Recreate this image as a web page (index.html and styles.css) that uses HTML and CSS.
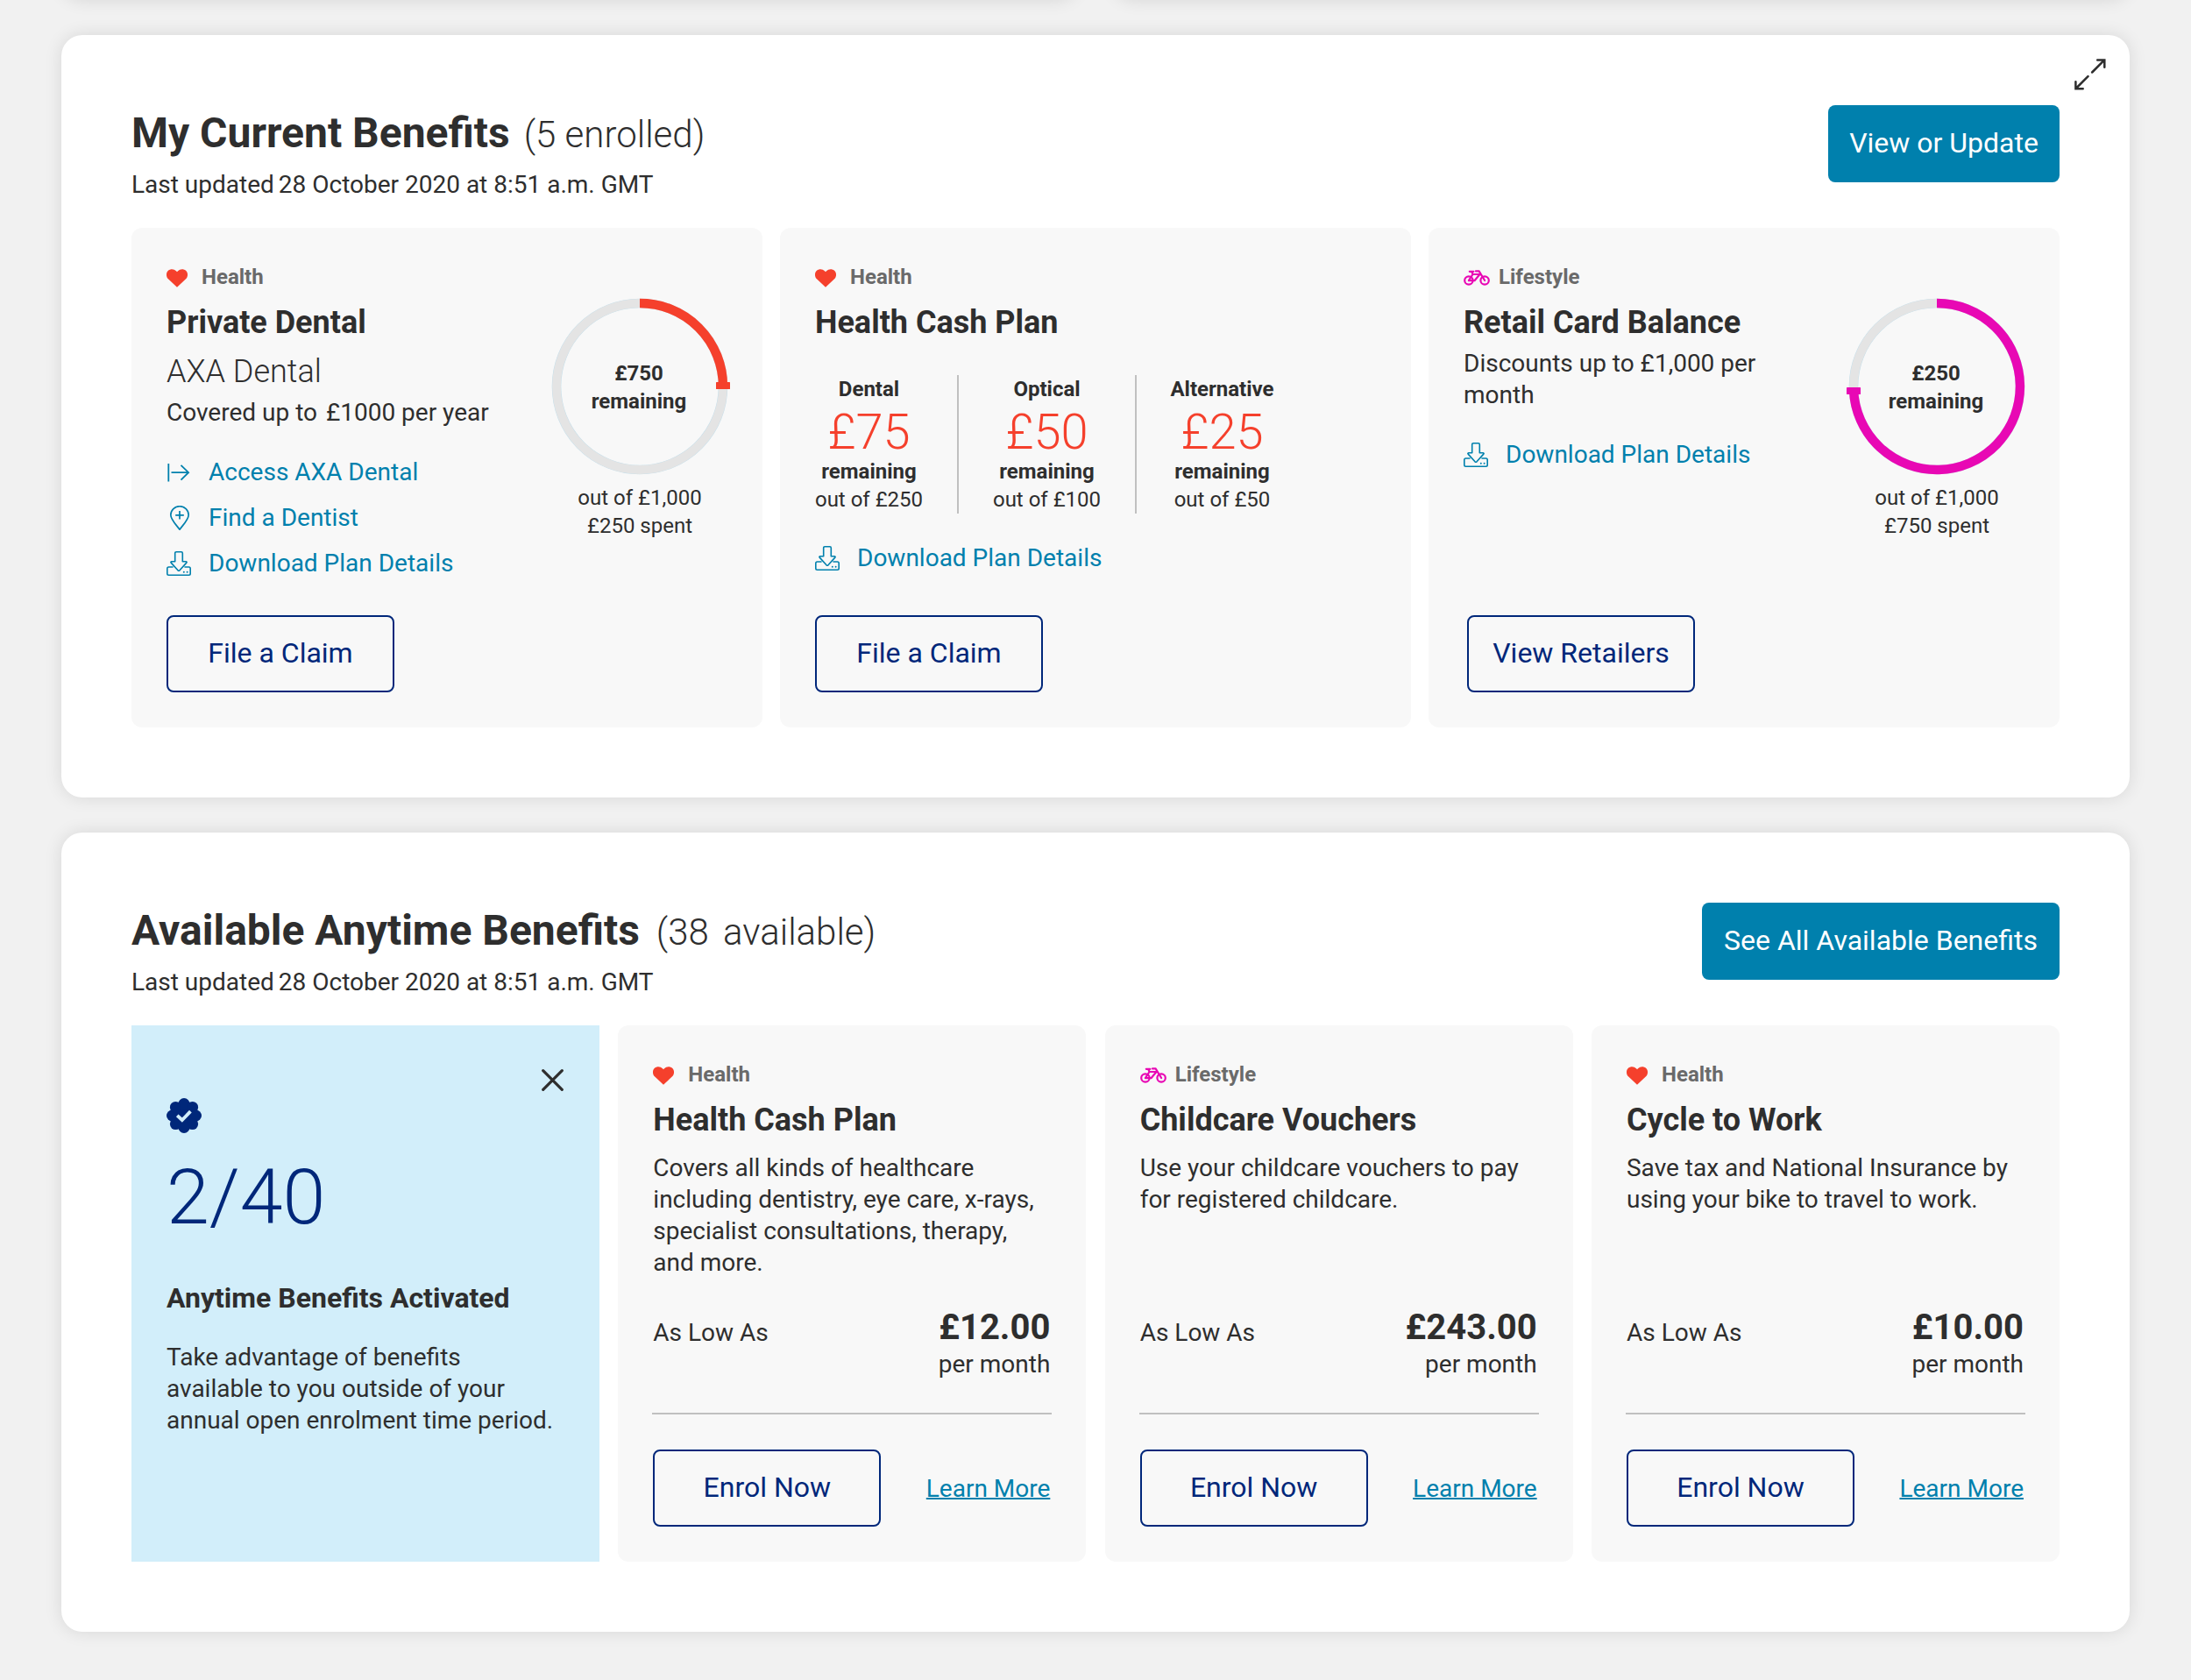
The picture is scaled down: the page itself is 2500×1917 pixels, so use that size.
FILE: index.html
```html
<!DOCTYPE html>
<html lang="en-GB">
<head>
<meta charset="utf-8">
<title>Benefits</title>
<link rel="stylesheet" href="styles.css">
</head>
<body>
<svg class="sprite" aria-hidden="true">
  <symbol id="heart" viewBox="0 0 24 21"><path d="M12 20.8 1.9 11.2C-.8 8.4-.6 4 2 1.7 4.600-.6 8.700-.3 11 2.200L12 3.300l1-1.100C15.300-.3 19.400-.6 22 1.700c2.600 2.300 2.800 6.700.1 9.500z" fill="#f5402c"/></symbol>
  <symbol id="bike" viewBox="0 0 30 18"><g fill="none" stroke="#e808b4" stroke-width="2.200" stroke-linejoin="round" stroke-linecap="round"><circle cx="5.900" cy="12" r="4.700"/><circle cx="24.100" cy="12" r="4.700"/><path d="M5.900 12.200h6.600L18.500 5H10.500zM12.500 12.200M10.500 5 9.200 1.800M6.800 1.800h4.600M14 1.400h3.600l6.500 10.600"/></g></symbol>
  <symbol id="download" viewBox="0 0 28 28"><g fill="none" stroke="#0080ad" stroke-width="1.600" stroke-linejoin="round" stroke-linecap="round"><path d="M9.700 2.200q0-1.400 1.400-1.400h5.800q1.400 0 1.400 1.400v9.500h4q1.300.3.500 1.400L15 21.800q-1 .9-2 0l-7.800-8.700q-.8-1.100.5-1.400h4z"/><path d="M7 18H2.500q-1.700 0-1.700 1.700v5.800q0 1.700 1.700 1.700h23q1.700 0 1.700-1.700v-5.800q0-1.700-1.700-1.700H21"/></g><circle cx="19.800" cy="23.700" r="1" fill="#0080ad"/><circle cx="23.600" cy="23.700" r="1" fill="#0080ad"/></symbol>
  <symbol id="enter" viewBox="0 0 28 28"><path d="M2.300 4v20.500M5.500 14.200h19.500M16.500 5.800l8.600 8.400-8.600 8.400" fill="none" stroke="#0080ad" stroke-width="1.800"/></symbol>
  <symbol id="pin" viewBox="0 0 28 28"><path d="M15 27.300C11.500 22.300 4.800 16 4.800 10.500a10.200 9.800 0 0 1 20.400 0C25.200 16 18.500 22.300 15 27.300zM15 6v9.600M10.200 10.800h9.600" fill="none" stroke="#0080ad" stroke-width="1.700" stroke-linejoin="round"/></symbol>
</svg>

<div class="upper-row"><div class="panel-end"></div><div class="panel-end"></div></div>

<section class="panel panel-current">
  <svg class="expand" viewBox="0 0 36 36"><path d="M20.200 15.500 34 1.700M26.200 1.400h8.100v8.300M15.500 20.200 1.700 34M1.400 26.200v8.100h8.300" fill="none" stroke="#2e2e2e" stroke-width="2.500" stroke-linecap="round"/></svg>
  <header class="panel-head">
    <div>
      <h2 class="panel-title">My Current Benefits<span class="count">(5 enrolled)</span></h2>
      <p class="updated"><span class="updated-lead">Last updated</span> 28 October 2020 at 8:51 a.m. GMT</p>
    </div>
    <button class="btn-solid btn-view">View or Update</button>
  </header>
  <div class="current-grid">
    <article class="card">
      <div class="card-body">
        <div class="card-main">
          <div class="tag"><span class="tag-icon"><svg class="i-heart"><use href="#heart"/></svg></span>Health</div>
          <h3 class="card-title">Private Dental</h3>
          <p class="provider">AXA Dental</p>
          <p class="text cover">Covered up to <span class="cover-sum">£1000 per year</span></p>
          <ul class="links">
            <li class="link"><svg class="i-link"><use href="#enter"/></svg>Access AXA Dental</li>
            <li class="link"><svg class="i-link"><use href="#pin"/></svg>Find a Dentist</li>
            <li class="link"><svg class="i-link"><use href="#download"/></svg>Download Plan Details</li>
          </ul>
        </div>
        <div class="gauge">
          <div class="ring">
            <svg class="ring-svg" viewBox="0 0 200 200"><circle cx="100" cy="100" r="95" fill="none" stroke="#c3dfec" stroke-width="10.600"/><circle cx="100" cy="100" r="95" fill="none" stroke="#e4e4e4" stroke-width="9.800"/><path d="M100 5a95 95 0 0 1 95 95" fill="none" stroke="#f5402c" stroke-width="10.400"/><rect x="187" y="95" width="16" height="8" rx=".5" fill="#f5402c"/></svg>
            <p class="ring-label">£750<br>remaining</p>
          </div>
          <p class="ring-note">out of £1,000<br>£250 spent</p>
        </div>
      </div>
      <button class="btn-line">File a Claim</button>
    </article>

    <article class="card">
      <div class="tag"><span class="tag-icon"><svg class="i-heart"><use href="#heart"/></svg></span>Health</div>
      <h3 class="card-title">Health Cash Plan</h3>
      <div class="stats">
        <div class="stat"><b>Dental</b><span class="amount">£75</span><b>remaining</b><span>out of £250</span></div>
        <i class="stat-rule"></i>
        <div class="stat"><b>Optical</b><span class="amount">£50</span><b>remaining</b><span>out of £100</span></div>
        <i class="stat-rule"></i>
        <div class="stat stat-last"><b>Alternative</b><span class="amount">£25</span><b>remaining</b><span>out of £50</span></div>
      </div>
      <ul class="links links-stats">
        <li class="link"><svg class="i-link"><use href="#download"/></svg>Download Plan Details</li>
      </ul>
      <button class="btn-line">File a Claim</button>
    </article>

    <article class="card">
      <div class="card-body">
        <div class="card-main">
          <div class="tag"><span class="tag-icon"><svg class="i-bike"><use href="#bike"/></svg></span>Lifestyle</div>
          <h3 class="card-title">Retail Card Balance</h3>
          <p class="text discount">Discounts up to £1,000 per<br>month</p>
          <ul class="links">
            <li class="link"><svg class="i-link"><use href="#download"/></svg>Download Plan Details</li>
          </ul>
        </div>
        <div class="gauge">
          <div class="ring">
            <svg class="ring-svg" viewBox="0 0 200 200"><circle cx="100" cy="100" r="95" fill="none" stroke="#c3dfec" stroke-width="10.600"/><circle cx="100" cy="100" r="95" fill="none" stroke="#e4e4e4" stroke-width="9.800"/><path d="M100 5a95 95 0 1 1-95 99" fill="none" stroke="#e808b4" stroke-width="10.400"/><rect x="-3" y="101" width="16" height="8" rx=".5" fill="#e808b4"/></svg>
            <p class="ring-label">£250<br>remaining</p>
          </div>
          <p class="ring-note">out of £1,000<br>£750 spent</p>
        </div>
      </div>
      <button class="btn-line btn-retailers">View Retailers</button>
    </article>
  </div>
</section>

<section class="panel panel-available">
  <header class="panel-head">
    <div>
      <h2 class="panel-title">Available Anytime Benefits<span class="count count-wide">(38 available)</span></h2>
      <p class="updated"><span class="updated-lead">Last updated</span> 28 October 2020 at 8:51 a.m. GMT</p>
    </div>
    <button class="btn-solid btn-all">See All Available Benefits</button>
  </header>
  <div class="available-grid">
    <aside class="promo">
      <svg class="close" viewBox="0 0 25 25"><path d="M1.700 1.700l21.600 21.600M23.300 1.700l-21.600 21.600" stroke="#2e2e2e" stroke-width="3.200" stroke-linecap="round"/></svg>
      <svg class="badge" viewBox="0 0 40 40"><g fill="#00277a"><circle cx="20" cy="20" r="16.500"/><circle cx="20" cy="6.500" r="6.500"/><circle cx="29.600" cy="10.400" r="6.500"/><circle cx="33.500" cy="20" r="6.500"/><circle cx="29.600" cy="29.600" r="6.500"/><circle cx="20" cy="33.500" r="6.500"/><circle cx="10.400" cy="29.600" r="6.500"/><circle cx="6.500" cy="20" r="6.500"/><circle cx="10.400" cy="10.400" r="6.500"/></g><path d="M12.200 19.800l5.600 5.200 9.600-9.800" fill="none" stroke="#d2eefa" stroke-width="3.800"/></svg>
      <p class="tally">2/40</p>
      <h3 class="promo-title">Anytime Benefits Activated</h3>
      <p class="text">Take advantage of benefits<br>available to you outside of your<br>annual open enrolment time period.</p>
    </aside>

    <article class="card">
      <div class="tag"><span class="tag-icon"><svg class="i-heart"><use href="#heart"/></svg></span>Health</div>
      <h3 class="card-title">Health Cash Plan</h3>
      <p class="text desc">Covers all kinds of healthcare<br>including dentistry, eye care, x-rays,<br>specialist consultations, therapy,<br>and more.</p>
      <div class="price-row"><span class="text low">As Low As</span><div class="price-box"><p class="price">£12.00</p><p class="text">per month</p></div></div>
      <hr class="rule">
      <div class="actions"><button class="btn-line">Enrol Now</button><span class="more">Learn More</span></div>
    </article>

    <article class="card">
      <div class="tag"><span class="tag-icon"><svg class="i-bike"><use href="#bike"/></svg></span>Lifestyle</div>
      <h3 class="card-title">Childcare Vouchers</h3>
      <p class="text desc">Use your childcare vouchers to pay<br>for registered childcare.</p>
      <div class="price-row"><span class="text low">As Low As</span><div class="price-box"><p class="price">£243.00</p><p class="text">per month</p></div></div>
      <hr class="rule">
      <div class="actions"><button class="btn-line">Enrol Now</button><span class="more">Learn More</span></div>
    </article>

    <article class="card">
      <div class="tag"><span class="tag-icon"><svg class="i-heart"><use href="#heart"/></svg></span>Health</div>
      <h3 class="card-title">Cycle to Work</h3>
      <p class="text desc">Save tax and National Insurance by<br>using your bike to travel to work.</p>
      <div class="price-row"><span class="text low">As Low As</span><div class="price-box"><p class="price">£10.00</p><p class="text">per month</p></div></div>
      <hr class="rule">
      <div class="actions"><button class="btn-line">Enrol Now</button><span class="more">Learn More</span></div>
    </article>
  </div>
</section>
</body>
</html>
```
FILE: styles.css
```css
* { box-sizing: border-box; margin: 0; padding: 0; }
body {
  height: 1917px;
  overflow: hidden;
  background: #f1f1f1;
  color: #2e2e2e;
  font-family: Roboto, "Liberation Sans", sans-serif;
  white-space: nowrap;
}
.sprite { display: none; }
svg { display: block; flex: none; }
button { font: inherit; }

.upper-row { display: flex; gap: 40px; height: 60px; margin: -60px 70px 0; }
.panel-end { flex: 1; background: #fff; border-radius: 24px; box-shadow: 0 0 20px rgba(0, 0, 0, .11); }

.panel {
  position: relative;
  margin: 40px 70px 0;
  padding: 80px;
  background: #fff;
  border-radius: 24px;
  box-shadow: 0 0 20px rgba(0, 0, 0, .11);
}
.panel-current { height: 870px; }
.panel-available { height: 912px; }
.expand { position: absolute; top: 27px; right: 27px; width: 36px; height: 36px; }

.panel-head { display: flex; justify-content: space-between; align-items: flex-start; height: 140px; }
.panel-title { padding-top: 2px; font-size: 48px; line-height: 60px; font-weight: 700; }
.count { margin-left: 16px; font-size: 42px; font-weight: 300; }
.count-wide { margin-left: 19px; word-spacing: 6px; }
.updated { margin-top: 9px; font-size: 28px; line-height: 36px; }
.updated-lead { margin-right: -2px; }

.btn-solid { height: 88px; padding-bottom: 2px; border: 0; border-radius: 8px; background: #0080ad; color: #fff; font-size: 32px; }
.btn-view { width: 264px; }
.btn-all { width: 408px; }
.btn-line {
  flex: none;
  width: 260px;
  height: 88px;
  padding-bottom: 2px;
  border: 2px solid #00277a;
  border-radius: 8px;
  background: transparent;
  color: #00277a;
  font-size: 32px;
}

.current-grid { display: grid; grid-template-columns: repeat(3, 720px); gap: 20px; height: 570px; }
.available-grid { display: grid; grid-template-columns: repeat(4, 534px); justify-content: space-between; height: 612px; }
.card { display: flex; flex-direction: column; padding: 40px; background: #f8f8f8; border-radius: 12px; }
.current-grid .btn-line { margin-top: auto; }
.current-grid .btn-retailers { margin-left: 4px; }
.card-body { display: flex; justify-content: space-between; }

.tag { display: flex; align-items: center; font-size: 24px; line-height: 32px; font-weight: 700; color: #6a6a6a; }
.tag-icon { width: 40px; }
.i-heart { width: 24px; height: 21px; margin-top: 3px; }
.i-bike { width: 30px; height: 18px; margin-top: 2px; }
.card-title { margin-top: 14px; font-size: 36px; line-height: 44px; font-weight: 700; }
.provider { margin-top: 12px; font-size: 36px; line-height: 44px; font-weight: 300; }
.text { font-size: 28px; line-height: 36px; }
.cover { margin-top: 7px; }
.cover-sum { margin-left: 3px; }
.discount { margin-top: 7px; }
.desc { margin-top: 15px; }

.links { display: flex; flex-direction: column; gap: 16px; margin-top: 32px; list-style: none; }
.links-stats { margin-top: 33px; }
.link { display: flex; align-items: center; gap: 20px; font-size: 28px; line-height: 36px; color: #0080ad; }
.i-link { width: 28px; height: 28px; }

.gauge { width: 200px; padding-top: 41px; text-align: center; font-size: 24px; line-height: 32px; }
.ring { display: grid; height: 200px; }
.ring-svg { grid-area: 1 / 1; width: 200px; height: 200px; overflow: visible; }
.ring-label { grid-area: 1 / 1; padding: 69px 2px 0 0; font-weight: 700; }
.ring-note { margin-top: 11px; }

.stats { display: flex; gap: 39px; height: 158px; margin-top: 38px; }
.stat { display: flex; flex-direction: column; align-items: center; width: 123px; font-size: 24px; line-height: 32px; }
.stat-last { width: 117px; }
.stat-rule { width: 2px; background: #c0c0c0; }
.amount { margin-top: 4px; font-size: 56px; line-height: 58px; font-weight: 300; color: #f5402c; }

.promo { padding: 50px 41px 40px 40px; background: #d2eefa; }
.close { width: 25px; height: 25px; margin-left: auto; }
.badge { width: 40px; height: 40px; margin-top: 8px; }
.tally { margin-top: 29px; font-size: 88px; line-height: 88px; font-weight: 300; color: #00277a; }
.promo-title { margin: 51px 0 30px; font-size: 32px; line-height: 40px; font-weight: 700; }

.price-row { display: flex; justify-content: space-between; height: 85px; margin-top: auto; }
.low { padding-top: 13px; }
.price-box { padding-right: 1px; text-align: right; }
.price { padding-top: 1px; font-size: 40px; line-height: 48px; font-weight: 700; }
.rule { height: 2px; margin: 37px -1px 40px; border: 0; background: #c0c0c0; }
.actions { display: flex; justify-content: space-between; align-items: center; }
.more { margin-right: 1px; font-size: 28px; color: #0080ad; text-decoration: underline; text-decoration-thickness: 2px; }
```
